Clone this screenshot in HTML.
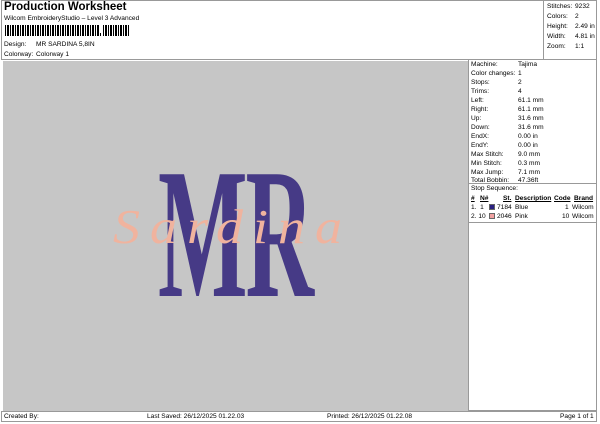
<!DOCTYPE html>
<html><head><style>
body{margin:0;width:600px;height:424px;background:#fff;font-family:"Liberation Sans",sans-serif;font-size:6.6px;color:#000;position:relative;overflow:hidden}
.a{position:absolute;white-space:nowrap}
.r{position:absolute;left:471px;white-space:nowrap}
.v{position:absolute;left:518px;white-space:nowrap}
</style></head><body>
<div class="a" style="left:1px;top:0;width:596px;height:60px;border:1px solid #999;box-sizing:border-box"></div>
<div class="a" style="left:543px;top:0;width:1px;height:60px;background:#999"></div>
<div class="a" style="left:4px;top:1px;font-size:11.5px;font-weight:bold">Production Worksheet</div>
<div class="a" style="left:4px;top:15px">Wilcom EmbroideryStudio – Level 3 Advanced</div>
<div class="a" style="left:5px;top:25px;width:95px;height:11px;background:repeating-linear-gradient(90deg,#000 0 1px,#fff 1px 2px,#000 2px 3px,#000 3px 4px,#fff 4px 5px)"></div>
<div class="a" style="left:100px;top:33px;width:1px;height:3px;background:#000"></div>
<div class="a" style="left:103px;top:25px;width:26px;height:11px;background:repeating-linear-gradient(90deg,#000 0 1px,#fff 1px 2px,#000 2px 4px,#fff 4px 5px)"></div>
<div class="a" style="left:4px;top:41px">Design:</div><div class="a" style="left:36px;top:41px">MR SARDINA 5,8IN</div>
<div class="a" style="left:4px;top:51px">Colorway:</div><div class="a" style="left:36px;top:51px">Colorway 1</div>
<div class="a" style="left:547px;top:3px">Stitches:</div><div class="a" style="left:575px;top:3px">9232</div>
<div class="a" style="left:547px;top:13px">Colors:</div><div class="a" style="left:575px;top:13px">2</div>
<div class="a" style="left:547px;top:23px">Height:</div><div class="a" style="left:575px;top:23px">2.49 in</div>
<div class="a" style="left:547px;top:33px">Width:</div><div class="a" style="left:575px;top:33px">4.81 in</div>
<div class="a" style="left:547px;top:43px">Zoom:</div><div class="a" style="left:575px;top:43px">1:1</div>
<div class="a" style="left:3px;top:61px;width:465px;height:350px;background:#c6c6c6"></div>
<div class="a" style="left:468px;top:60px;width:129px;height:351px;border:1px solid #999;border-top:none;box-sizing:border-box"></div>
<div class="a" style="left:469px;top:183px;width:128px;height:1px;background:#999"></div>
<div class="a" style="left:469px;top:222px;width:128px;height:1px;background:#999"></div>
<div class="a" style="left:158px;top:141px;font-family:'Liberation Serif',serif;font-weight:bold;font-size:186px;line-height:1;color:#463a86;transform:scaleX(0.51);transform-origin:0 0;letter-spacing:-4px">MR</div>
<div class="a" style="left:113px;top:200px;font-family:'Liberation Serif',serif;font-style:italic;font-size:54px;line-height:1;color:#f0b39e;letter-spacing:10px;transform:scaleY(0.9)">Sardina</div>
<div class="r" style="top:61px">Machine:</div><div class="v" style="top:61px">Tajima</div>
<div class="r" style="top:70px">Color changes:</div><div class="v" style="top:70px">1</div>
<div class="r" style="top:79px">Stops:</div><div class="v" style="top:79px">2</div>
<div class="r" style="top:88px">Trims:</div><div class="v" style="top:88px">4</div>
<div class="r" style="top:97px">Left:</div><div class="v" style="top:97px">61.1 mm</div>
<div class="r" style="top:106px">Right:</div><div class="v" style="top:106px">61.1 mm</div>
<div class="r" style="top:115px">Up:</div><div class="v" style="top:115px">31.6 mm</div>
<div class="r" style="top:124px">Down:</div><div class="v" style="top:124px">31.6 mm</div>
<div class="r" style="top:133px">EndX:</div><div class="v" style="top:133px">0.00 in</div>
<div class="r" style="top:142px">EndY:</div><div class="v" style="top:142px">0.00 in</div>
<div class="r" style="top:151px">Max Stitch:</div><div class="v" style="top:151px">9.0 mm</div>
<div class="r" style="top:160px">Min Stitch:</div><div class="v" style="top:160px">0.3 mm</div>
<div class="r" style="top:169px">Max Jump:</div><div class="v" style="top:169px">7.1 mm</div>
<div class="r" style="top:177px">Total Bobbin:</div><div class="v" style="top:177px">47.36ft</div>
<div class="r" style="top:185px">Stop Sequence:</div>
<div class="a" style="left:471px;top:195px;font-weight:bold;text-decoration:underline">#</div>
<div class="a" style="left:480px;top:195px;font-weight:bold;text-decoration:underline">N#</div>
<div class="a" style="left:503px;top:195px;font-weight:bold;text-decoration:underline">St.</div>
<div class="a" style="left:515px;top:195px;font-weight:bold;text-decoration:underline">Description</div>
<div class="a" style="left:554px;top:195px;font-weight:bold;text-decoration:underline">Code</div>
<div class="a" style="left:574px;top:195px;font-weight:bold;text-decoration:underline">Brand</div>
<div class="a" style="left:471px;top:204px">1.&nbsp; 1</div>
<div class="a" style="left:489px;top:204px;width:6px;height:6px;background:#2a2080;border:1px solid #666;box-sizing:border-box"></div>
<div class="a" style="left:497px;top:204px">7184</div><div class="a" style="left:515px;top:204px">Blue</div>
<div class="a" style="left:565px;top:204px">1</div><div class="a" style="left:572px;top:204px">Wilcom</div>
<div class="a" style="left:471px;top:213px">2.&nbsp;10</div>
<div class="a" style="left:489px;top:213px;width:6px;height:6px;background:#f0a0a0;border:1px solid #666;box-sizing:border-box"></div>
<div class="a" style="left:497px;top:213px">2046</div><div class="a" style="left:515px;top:213px">Pink</div>
<div class="a" style="left:562px;top:213px">10</div><div class="a" style="left:572px;top:213px">Wilcom</div>
<div class="a" style="left:1px;top:411px;width:596px;height:11px;border:1px solid #999;box-sizing:border-box"></div>
<div class="a" style="left:4px;top:413px">Created By:</div>
<div class="a" style="left:147px;top:413px">Last Saved: 26/12/2025 01.22.03</div>
<div class="a" style="left:327px;top:413px">Printed: 26/12/2025 01.22.08</div>
<div class="a" style="left:560px;top:413px">Page 1 of 1</div>
</body></html>
